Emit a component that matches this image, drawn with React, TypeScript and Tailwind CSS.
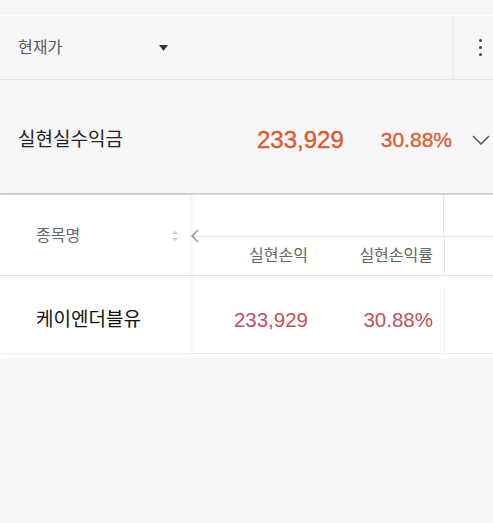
import React from 'react';

const font = { fontFamily: '"Liberation Sans", "Noto Sans CJK KR", sans-serif' };

export default function App() {
  return (
    <div className="min-h-[523px] bg-[#f7f7f9]" style={font}>
      <div className="h-[15px] bg-[#f6f6f6]" />
      <div className="h-px bg-white" />

      {/* dropdown header */}
      <div className="flex h-[64px] border-b border-[#e6e6e8]">
        <div className="flex flex-1 items-center pl-[18px]">
          <span className="text-[16px] text-[#555]">현재가</span>
          <svg className="ml-[97px]" width="9" height="6" viewBox="0 0 9 6">
            <path d="M0 0 L9 0 L4.5 6 Z" fill="#333" />
          </svg>
        </div>
        <div className="flex w-[40px] items-center justify-center border-l border-[#ececee] pl-[14px]">
          <div className="flex flex-col gap-[4px]">
            <span className="block h-[3px] w-[3px] rounded-full bg-[#444]" />
            <span className="block h-[3px] w-[3px] rounded-full bg-[#444]" />
            <span className="block h-[3px] w-[3px] rounded-full bg-[#444]" />
          </div>
        </div>
      </div>

      {/* summary */}
      <div className="flex h-[113px] items-center pl-[18px] pt-[7px]">
        <span className="text-[19px] text-[#222]">실현실수익금</span>
        <span className="ml-auto text-[24px] text-[#dd5a2b] [-webkit-text-stroke:0.4px_#dd5a2b]">233,929</span>
        <span className="ml-[37px] text-[21px] text-[#dd5a2b] [-webkit-text-stroke:0.3px_#dd5a2b]">30.88%</span>
        <svg className="ml-[20px] mr-[3px]" width="18" height="10" viewBox="0 0 18 10">
          <path d="M1 1 L9 9 L17 1" fill="none" stroke="#555" strokeWidth="1.5" />
        </svg>
      </div>
      <div className="h-[2px] bg-[#d2d2d2]" />

      {/* table */}
      <div className="flex bg-white">
        <div className="relative z-10 w-[190px] shadow-[2px_0_4px_rgba(0,0,0,0.06)]">
          <div className="flex h-[81px] items-center border-b border-[#e4e4e4] pl-[36px] pr-[11px] pt-[2px]">
            <span className="text-[16px] text-[#666]">종목명</span>
            <svg className="ml-auto" width="8" height="14" viewBox="0 0 8 14">
              <path d="M1 5 L4 2 L7 5 Z" fill="#ccc" />
              <path d="M1 9 L4 12 L7 9 Z" fill="#ccc" />
            </svg>
          </div>
          <div className="flex h-[78px] items-center border-b border-[#f0f0f0] pl-[36px] pt-[12px]">
            <span className="text-[19px] text-[#111]">케이엔더블유</span>
          </div>
        </div>

        <div className="relative flex-1">
          <svg className="absolute left-[1px] top-[34px]" width="8" height="14" viewBox="0 0 8 14">
            <path d="M7 1 L1 7 L7 13" fill="none" stroke="#888" strokeWidth="1.2" />
          </svg>
          <div className="flex h-[81px] flex-col border-b border-[#e4e4e4]">
            <div className="flex h-[42px] border-b border-[#e8e8e8]">
              <div className="w-[254px] border-r border-[#e8e8e8]" />
            </div>
            <div className="flex flex-1 items-center">
              <span className="w-[118px] text-right text-[16px] text-[#666]">실현손익</span>
              <span className="w-[125px] text-right text-[16px] text-[#666]">실현손익률</span>
              <div className="ml-[11px] h-full border-l border-[#e8e8e8]" />
            </div>
          </div>
          <div className="flex h-[78px] items-center border-b border-[#f0f0f0] pt-[12px]">
            <span className="w-[118px] text-right text-[20.5px] text-[#c4505c]">233,929</span>
            <span className="w-[125px] text-right text-[20.5px] text-[#c4505c]">30.88%</span>
            <div className="ml-[11px] h-full border-l border-[#f0f0f0]" />
          </div>
        </div>
      </div>
      <div className="h-[4px] bg-white" />
    </div>
  );
}
